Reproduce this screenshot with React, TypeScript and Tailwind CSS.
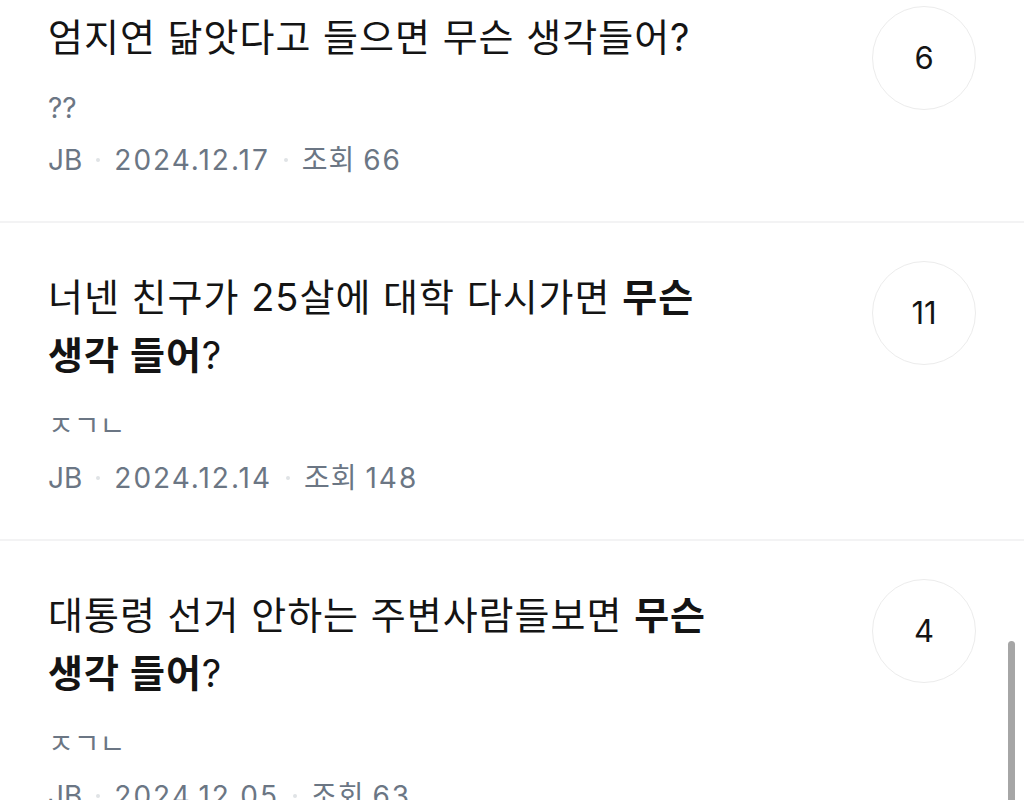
import React from 'react';

type Post = {
  title: { text: string; bold?: boolean }[];
  body: string;
  author: string;
  date: string;
  views: number;
  comments: number;
};

const posts: Post[] = [
  {
    title: [{ text: '엄지연 닮앗다고 들으면 무슨 생각들어?' }],
    body: '??',
    author: 'JB',
    date: '2024.12.17',
    views: 66,
    comments: 6,
  },
  {
    title: [
      { text: '너넨 친구가 25살에 대학 다시가면 ' },
      { text: '무슨 생각 들어', bold: true },
      { text: '?' },
    ],
    body: 'ㅈㄱㄴ',
    author: 'JB',
    date: '2024.12.14',
    views: 148,
    comments: 11,
  },
  {
    title: [
      { text: '대통령 선거 안하는 주변사람들보면 ' },
      { text: '무슨 생각 들어', bold: true },
      { text: '?' },
    ],
    body: 'ㅈㄱㄴ',
    author: 'JB',
    date: '2024.12.05',
    views: 63,
    comments: 4,
  },
];

const font = { fontFamily: 'Inter, "Noto Sans CJK KR", sans-serif' };

function Dot() {
  return <span className="mx-[14px] inline-block h-[4px] w-[4px] rounded-full bg-[#e0e3e6]" />;
}

function PostRow({ post, first }: { post: Post; first?: boolean }) {
  return (
    <div className="flex items-start justify-between border-b-2 border-[#f3f3f4] px-12 pb-[41px] pt-[38px]">
      <div className="w-[690px]">
        <div className="mt-[7px] break-keep text-[38px] leading-[58px] tracking-[1px] text-[#141414]">
          {post.title.map((t, i) => (
            <span key={i} className={t.bold ? 'font-bold' : 'font-normal'}>
              {t.text}
            </span>
          ))}
        </div>
        <div className="mt-[22px] text-[28px] leading-[40px] text-[#6b7684]">{post.body}</div>
        <div className="mt-[12px] flex items-center text-[28px] leading-[40px] text-[#6b7684]">
          <span>{post.author}</span>
          <Dot />
          <span className="tracking-[2px]">{post.date}</span>
          <Dot />
          <span>
            <span className="tracking-[1px]">조회</span> <span className="tracking-[2px]">{post.views}</span>
          </span>
        </div>
      </div>
      <div
        className={`flex h-[104px] w-[104px] shrink-0 items-center justify-center rounded-full border-[1.5px] border-[#ececec] text-[31px] text-[#141414] ${
          first ? 'mt-[5px]' : 'mt-0'
        }`}
      >
        {post.comments}
      </div>
    </div>
  );
}

export default function App() {
  return (
    <div className="relative h-[800px] w-[1024px] overflow-hidden bg-white" style={font}>
      <div className="-mt-[37px]">
        {posts.map((p, i) => (
          <PostRow key={i} post={p} first={i === 0} />
        ))}
      </div>
      <div className="absolute left-[1008px] top-[641px] h-[200px] w-[7px] rounded-full bg-[#a6a6a6]" />
    </div>
  );
}
